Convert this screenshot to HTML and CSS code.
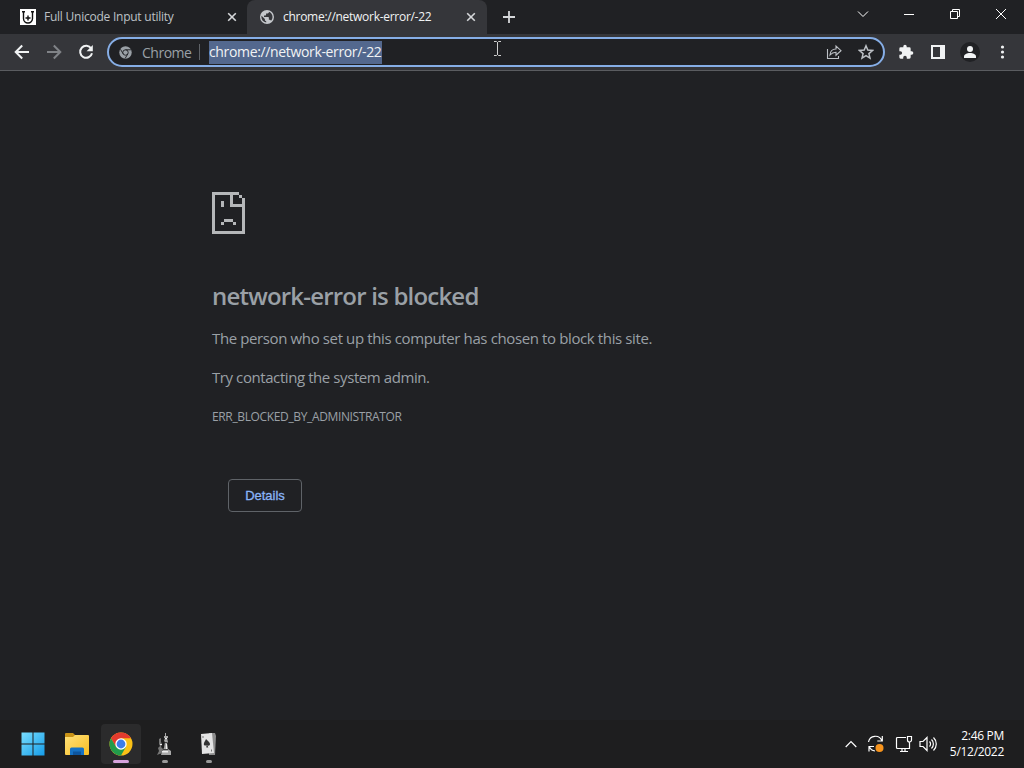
FILE: index.html
```html
<!DOCTYPE html>
<html lang="en">
  <head>
    <meta charset="UTF-8" />
    <meta name="viewport" content="width=device-width, initial-scale=1.0" />
    <title>chrome://network-error/-22</title>
    <link rel="stylesheet" href="styles.css">
  </head>
  <body>
    <div class="tab-strip">
      <div class="tab">
        <svg class="tab-icon" viewBox="0 0 16 16">
          <path fill="#fff" d="M0 0h16v16H0z" />
          <path fill="none" stroke="#111" stroke-width="1.4" d="M2 2.800h3M3.500 3v6.500a4.500 4.500 0 0 0 9 0V3M11 2.800h3M8 6.500v5M5.500 9h5" />
        </svg>
        <span class="tab-title tab-title-first">Full Unicode Input utility</span>
        <svg class="tab-close" viewBox="0 0 10 10"><path d="M1.2 1.2l7.6 7.6M8.8 1.2L1.2 8.8" /></svg>
      </div>
      <div class="tab active">
        <svg class="tab-icon" viewBox="0 0 24 24">
          <path fill="#c4c7cb" d="M12 1.5a10.5 10.5 0 1 0 0 21 10.5 10.5 0 0 0 0-21zM10.8 20.2C6.500 19.700 3.600 16.200 3.600 12c0-.6.1-1.300.2-1.900L8.800 15v1.200c0 1.100.9 2 2 2zM18 17.600c-.3-.9-1.100-1.500-2.100-1.500h-1.100v-3.200c0-.6-.5-1-1-1H7.500V9.800h2.100c.6 0 1-.5 1-1V6.700h2.200c1.200 0 2.100-1 2.100-2.100v-.5C18 5.400 20.300 8.500 20.300 12c0 2.200-.9 4.200-2.300 5.600z" />
        </svg>
        <span class="tab-title tab-title-active">chrome://network-error/-22</span>
        <svg class="tab-close" viewBox="0 0 10 10"><path d="M1.2 1.2l7.6 7.6M8.8 1.2L1.2 8.8" /></svg>
      </div>
      <svg class="new-tab" viewBox="0 0 12 12"><path d="M6 0v12M0 6h12" /></svg>
      <div class="window-buttons">
        <svg viewBox="0 0 12 12"><path d="M1 3.500l5 5 5-5" /></svg>
        <svg viewBox="0 0 12 12"><path d="M1 6.500h10" /></svg>
        <svg viewBox="0 0 12 12"><path d="M1.500 3.500h7v7h-7zM3.500 3.500v-2h7v7h-2" /></svg>
        <svg viewBox="0 0 12 12"><path d="M1 1l10 10M11 1L1 11" /></svg>
      </div>
    </div>

    <div class="toolbar">
      <div class="nav">
        <svg viewBox="0 0 16 16"><path d="M15 8H2M8.200 1.500L1.700 8l6.500 6.500" /></svg>
        <svg class="disabled" viewBox="0 0 16 16"><path d="M1 8h13M7.800 1.500L14.300 8l-6.500 6.500" /></svg>
        <svg viewBox="0 0 16 16"><path d="M13.200 4.500A6 6 0 1 0 14 9.200" /><path class="solid" d="M14.800 1v6.200H8.600z" /></svg>
      </div>
      <div class="omnibox">
        <svg class="site-icon" viewBox="0 0 24 24">
          <circle cx="12" cy="12" r="11.500" fill="#9aa0a6" />
          <g fill="none" stroke="#202124" stroke-width="1.700">
            <circle cx="12" cy="12" r="5" />
            <path d="M12 7h10M7.700 14.500L2.700 6M16.300 14.500L11.300 23" />
          </g>
        </svg>
        <span class="site-name">Chrome</span>
        <span class="divider"></span>
        <span class="url">chrome://network-error/-22</span>
        <svg class="share" viewBox="0 0 16 16"><path d="M1.500 5v9.500h11V12M4 11c.3-4 2.500-6 6-6V2l5 4.700-5 4.500V8.300c-2.600 0-4.400.8-6 2.700z" /></svg>
        <svg class="star" viewBox="0 0 16 16"><path d="M8 1.800l1.800 4.300 4.700.4-3.600 3.100 1.100 4.600L8 11.700l-4 2.500 1.100-4.600L1.500 6.500l4.700-.4z" /></svg>
      </div>
      <div class="actions">
        <svg viewBox="0 0 24 24"><path class="solid" d="M20.500 11H19V7a2 2 0 0 0-2-2h-4V3.500a2.500 2.500 0 0 0-5 0V5H4a2 2 0 0 0-2 2v3.800h1.500a2.700 2.700 0 0 1 0 5.400H2V20a2 2 0 0 0 2 2h3.800v-1.500a2.700 2.700 0 0 1 5.400 0V22H17a2 2 0 0 0 2-2v-4h1.500a2.500 2.500 0 0 0 0-5z" /></svg>
        <svg viewBox="0 0 16 16"><path class="solid" fill-rule="evenodd" d="M1 1h14v14H1zM3 3v10h7V3z" /></svg>
        <svg class="profile" viewBox="0 0 20 20"><circle cx="10" cy="10" r="10" fill="#202124" /><circle class="solid" cx="10" cy="7" r="3" /><path class="solid" d="M4 16v-1.500c0-2 3-3.500 6-3.500s6 1.500 6 3.500V16z" /></svg>
        <svg viewBox="0 0 16 16"><circle class="solid" cx="8.500" cy="3" r="1.600" /><circle class="solid" cx="8.500" cy="8" r="1.600" /><circle class="solid" cx="8.500" cy="13" r="1.600" /></svg>
      </div>
    </div>

    <main class="error-page">
      <svg class="sad-icon" viewBox="0 0 11 14" shape-rendering="crispEdges">
        <path d="M0 0h9v1H7v3h3V2h1v12H0zM1 1v12h9V5H6V1zM9 1h1v1H9zM3 3h1v2H3zM4 9h3v1H4zM3 10h1v1H3zM7 10h1v1H7z" fill-rule="evenodd" />
      </svg>
      <h1>network-error is blocked</h1>
      <p class="summary">The person who set up this computer has chosen to block this site.</p>
      <p class="suggestion">Try contacting the system admin.</p>
      <p class="error-code">ERR_BLOCKED_BY_ADMINISTRATOR</p>
      <button class="details">Details</button>
    </main>

    <div class="taskbar">
      <div class="apps">
        <div class="app">
          <svg viewBox="0 0 24 24">
            <defs><linearGradient id="win" gradientUnits="userSpaceOnUse" x1="0" y1="0" x2="24" y2="24"><stop offset="0" stop-color="#7be0ff" /><stop offset="1" stop-color="#139be8" /></linearGradient></defs>
            <path fill="url(#win)" d="M.5.500h11v11H.5zM12.500.500h11v11h-11zM.5 12.500h11v11H.5zM12.500 12.500h11v11h-11z" />
          </svg>
        </div>
        <div class="app">
          <svg viewBox="0 0 24 24">
            <defs><linearGradient id="folder" x1="0" y1="0" x2="1" y2="1"><stop offset="0" stop-color="#ffe17a" /><stop offset="1" stop-color="#f8bd22" /></linearGradient></defs>
            <path fill="#c99317" d="M0 2a1 1 0 0 1 1-1h7l2 2h6v4H0z" />
            <path fill="url(#folder)" d="M0 5h8l2-2h13a1 1 0 0 1 1 1v18a1 1 0 0 1-1 1H1a1 1 0 0 1-1-1z" />
            <path fill="#1672c4" d="M5 23v-6a1.500 1.500 0 0 1 1.500-1.500h11A1.500 1.500 0 0 1 19 17v6z" />
            <path fill="#0d559e" d="M8 19.500h8V23H8z" />
          </svg>
        </div>
        <div class="app current">
          <svg viewBox="0 0 24 24">
            <circle cx="12" cy="12" r="11.500" fill="#fbc116" />
            <path fill="#e33b2e" d="M2 6.300A11.500 11.500 0 0 1 22 6.300H12L7 15z" />
            <path fill="#219b4b" d="M2 6.300A11.500 11.500 0 0 0 12 23.500l5-8.700-10 0z" />
            <circle cx="12" cy="12" r="5.700" fill="#fff" />
            <circle cx="12" cy="12" r="4.400" fill="#3d7de9" />
          </svg>
        </div>
        <div class="app running">
          <svg viewBox="0 0 24 24">
            <path fill="#a9a9a9" d="M11 4h1V1h1v3h2v2h-1l1 4-1 1 1 6 3 2v4H8l1-4 2-3 1-6-1-1 1-3h-1z" />
            <path fill="#777" d="M6 7l2-1v4l1 2-1 3 2 2-1 4-5 2 2-4-1-3 2-2-1-2z" />
            <path fill="#eee" d="M13 12h1v5h-1zM9 19h6v1.500H9zM12 6h2v1h-2zM7 12h2v1H7z" />
            <path fill="#444" d="M10 17h5v1h-5zM12 10h2v1h-2z" />
          </svg>
        </div>
        <div class="app running">
          <svg viewBox="0 0 24 24">
            <path fill="#8d8d8d" d="M12 1h6l1 3-1 19h-6z" />
            <path fill="#e4e4e4" d="M4 2l11-1 2 20-12 1z" />
            <path fill="#333" d="M9 7c1.500 2 4 3 4 5s-2 2-2.700 1l1 2.500h-2l.2-2.500c-1 1-2.700.6-2.700-1 0-2 1.700-3 2.200-5z" />
            <path fill="#777" d="M5.500 4h1v2h-1zM14 17.500h1v2h-1z" />
          </svg>
        </div>
      </div>
      <div class="tray">
        <svg class="chevron" viewBox="0 0 12 8"><path d="M.7 7L6 1.500 11.300 7" /></svg>
        <svg class="update" viewBox="0 0 18 18"><path d="M1.500 7a7 7 0 0 1 13.300-1.500M15.300 1v5h-5M2 16.500v-5h5M2.300 11.800A7 7 0 0 0 8 16" /><circle cx="12.500" cy="13" r="4" /></svg>
        <svg class="network" viewBox="0 0 18 18"><path d="M11 2.500H2.500a1 1 0 0 0-1 1v9a1 1 0 0 0 1 1h12V9M5 16.500h8M7 13.500v3M10 13.500v3M12.500 1.500h4v3.500a2 2 0 0 1-4 0zM14.500 7v3" /></svg>
        <svg class="volume" viewBox="0 0 18 18"><path d="M1 6.500h3l4-4v13l-4-4H1zM10.500 6.500a3.500 3.500 0 0 1 0 5M12.500 4.500a6.300 6.300 0 0 1 0 9M14.500 2.500a9 9 0 0 1 0 13" /></svg>
        <div class="clock">
          <span class="time">2:46 PM</span>
          <span class="date">5/12/2022</span>
        </div>
      </div>
    </div>

    <svg class="text-cursor" viewBox="0 0 9 17"><path d="M1 1.500h2.500l1 1 1-1H8M4.500 2v13M1 15.500h2.500l1-1 1 1H8" /></svg>
  </body>
</html>
```
FILE: styles.css
```css
* {
  box-sizing: border-box;
}

body {
  margin: 0;
  height: 768px;
  display: flex;
  flex-direction: column;
  overflow: hidden;
  background: #202124;
  color: #9aa0a6;
  font-family: "Open Sans", "Noto Sans", sans-serif;
}

svg {
  display: block;
  flex: none;
  fill: none;
}

.solid {
  fill: #f1f3f4;
  stroke: none;
}

/* tabs */
.tab-strip {
  display: flex;
  align-items: center;
  height: 34px;
  padding-left: 8px;
  flex: none;
}

.tab {
  display: flex;
  align-items: center;
  width: 239px;
  height: 34px;
  padding: 0 10px 0 12px;
  font-size: 12px;
  color: #bdc1c6;
}

.tab.active {
  width: 240px;
  padding-right: 11px;
  background: #35363a;
  border-radius: 8px 8px 0 0;
  color: #f1f3f4;
}

.tab-icon {
  width: 16px;
  height: 16px;
  margin-right: 8px;
}

.tab-title {
  flex: 1;
  padding-bottom: 1px;
  white-space: nowrap;
}

.tab-title-first {
  letter-spacing: -0.24px;
}

.tab-title-active {
  letter-spacing: -0.28px;
}

.tab-close {
  width: 10px;
  height: 10px;
  stroke: #d5d7da;
  stroke-width: 1.6;
}

.new-tab {
  width: 12px;
  height: 12px;
  margin-left: 16px;
  stroke: #d5d7da;
  stroke-width: 1.8;
}

.window-buttons {
  display: flex;
  gap: 34px;
  margin: -6px 17px 0 auto;
}

.window-buttons svg {
  width: 12px;
  height: 12px;
  stroke: #fff;
}

/* toolbar */
.toolbar {
  display: flex;
  align-items: center;
  flex: none;
  height: 37px;
  background: #35363a;
  border-bottom: 1px solid #5a5c60;
}

.nav {
  display: flex;
  gap: 16px;
  width: 107px;
  padding-left: 14px;
}

.nav svg {
  width: 16px;
  height: 16px;
  stroke: #f1f3f4;
  stroke-width: 2;
}

.nav .disabled {
  stroke: #808387;
}

.omnibox {
  display: flex;
  align-items: center;
  width: 778px;
  height: 30px;
  padding: 0 9px 0 10px;
  border: 2px solid #86aee6;
  border-radius: 15px;
  background: #202124;
  font-size: 14px;
}

.site-icon {
  width: 13px;
  height: 13px;
}

.site-name {
  width: 49px;
  margin-left: 10px;
  letter-spacing: -0.5px;
}

.divider {
  width: 1px;
  height: 16px;
  margin: 0 9px 0 8px;
  background: #5f6368;
}

.url {
  height: 23px;
  line-height: 22px;
  background: #53688e;
  color: #f1f3f4;
  letter-spacing: -0.35px;
  white-space: nowrap;
}

.share,
.star {
  width: 16px;
  height: 16px;
  stroke: #bdc1c6;
  stroke-width: 1.1;
}

.share {
  margin-left: auto;
}

.star {
  margin-left: 16px;
  stroke-width: 1.5;
}

.actions {
  display: flex;
  align-items: center;
  gap: 16px;
  padding-left: 13px;
}

.actions svg {
  width: 16px;
  height: 16px;
}

.actions .profile {
  width: 20px;
  height: 20px;
  margin: 0 -2px;
}

/* error page */
.error-page {
  flex: 1;
  padding: 121px 0 0 212px;
}

.sad-icon {
  width: 33px;
  height: 42px;
  fill: #b5b7b9;
}

h1 {
  margin: 46px 0 0;
  font-size: 24px;
  line-height: 32px;
  font-weight: 600;
  letter-spacing: -0.8px;
}

.error-page p {
  margin: 0;
  white-space: nowrap;
}

.error-page .summary,
.error-page .suggestion {
  font-size: 15px;
  line-height: 24px;
  letter-spacing: -0.38px;
}

.error-page .summary {
  margin-top: 14px;
}

.error-page .suggestion {
  margin-top: 15px;
  letter-spacing: -0.42px;
}

.error-page .error-code {
  margin-top: 20px;
  font-size: 12px;
  line-height: 16px;
  letter-spacing: -0.36px;
}

.details {
  display: block;
  width: 74px;
  height: 33px;
  margin: 54px 0 0 16px;
  padding: 0;
  border: 1px solid #5f6368;
  border-radius: 4px;
  background: none;
  color: #8ab4f8;
  font-family: "Liberation Sans", Arial, sans-serif;
  font-size: 13px;
  -webkit-text-stroke: 0.3px #8ab4f8;
}

/* taskbar */
.taskbar {
  display: flex;
  justify-content: space-between;
  flex: none;
  height: 48px;
  background: #1e1e1f;
}

.apps {
  display: flex;
  align-items: center;
  gap: 4px;
  padding-left: 13px;
}

.app {
  display: flex;
  flex-direction: column;
  align-items: center;
  width: 40px;
  height: 40px;
  padding-top: 8px;
  border-radius: 4px;
}

.app svg {
  width: 24px;
  height: 24px;
}

.app.current {
  background: #2b2b2c;
}

.app.current::after,
.app.running::after {
  content: "";
  width: 16px;
  height: 3px;
  margin-top: 4px;
  border-radius: 2px;
  background: #d7a3dd;
}

.app.running::after {
  width: 6px;
  background: #9a9a9a;
}

.tray {
  display: flex;
  align-items: center;
  padding-right: 20px;
}

.tray svg {
  stroke: #fff;
  stroke-width: 1.2;
}

.chevron {
  width: 12px;
  height: 8px;
}

.update {
  width: 18px;
  height: 18px;
  margin-left: 10px;
}

.update circle {
  fill: #f7941d;
  stroke: none;
}

.network {
  width: 18px;
  height: 18px;
  margin-left: 10px;
}

.volume {
  width: 18px;
  height: 18px;
  margin-left: 6px;
}

.clock {
  display: flex;
  flex-direction: column;
  align-items: flex-end;
  width: 67px;
  font-size: 12px;
  line-height: 16px;
  color: #fff;
  letter-spacing: -0.3px;
}

/* mouse pointer over the address bar */
.text-cursor {
  position: absolute;
  left: 493px;
  top: 40px;
  width: 9px;
  height: 17px;
  stroke: #d0d0d0;
}
```
